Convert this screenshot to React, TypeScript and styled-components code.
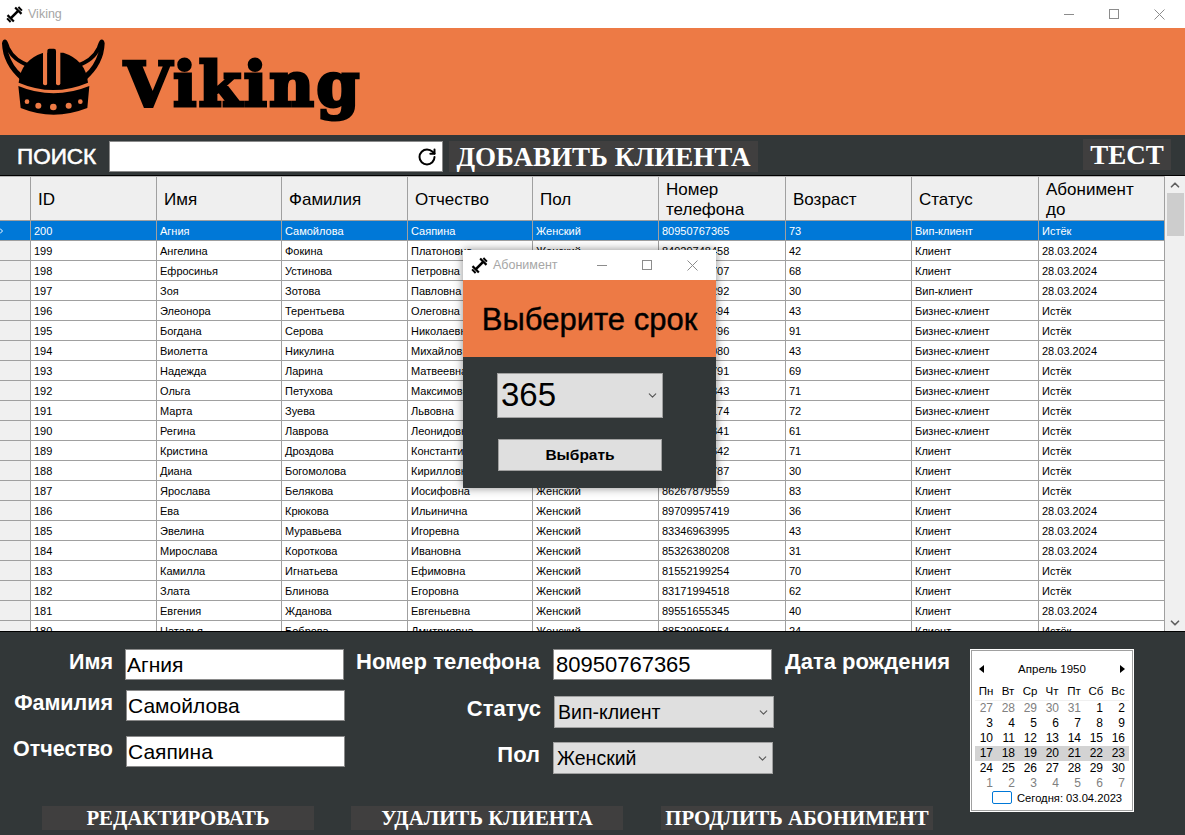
import React from 'react';
import styled, { createGlobalStyle } from 'styled-components';
import { ChevronDown, ChevronUp, RotateCw } from 'lucide-react';

const GlobalStyle = createGlobalStyle`
  html, body {
    margin: 0;
    padding: 0;
    overflow: hidden;
  }
  * {
    box-sizing: border-box;
  }
`;

const ORANGE = '#ed7a45';
const DARK = '#323738';
const SANS = `'Liberation Sans', Arial, sans-serif`;
const SERIF = `'Liberation Serif', 'Times New Roman', serif`;
const COLUMNS = '31px 126px 125px 126px 125px 126px 127px 126px 127px 126px';

const Page = styled.div`
  position: relative;
  width: 1185px;
  height: 835px;
  display: flex;
  flex-direction: column;
  overflow: hidden;
  background: ${DARK};
  font-family: ${SANS};
`;

const TitleBar = styled.div<{ $height: number; $right: number; $left: number }>`
  height: ${(p) => p.$height}px;
  flex: none;
  display: flex;
  align-items: center;
  padding: 0 ${(p) => p.$right}px 0 ${(p) => p.$left}px;
  background: #fff;
`;

const TitleText = styled.span`
  margin-left: 5px;
  font-size: 12.5px;
  color: #a6a6a6;
`;

const WindowControls = styled.div`
  margin-left: auto;
  display: flex;
  align-items: center;
  gap: 35px;
`;

const Banner = styled.div`
  height: 107px;
  flex: none;
  display: flex;
  align-items: flex-start;
  padding-top: 6px;
  background: ${ORANGE};
`;

const Wordmark = styled.div`
  margin: 15px 0 0 14px;
  font-family: 'DejaVu Serif', ${SERIF};
  font-weight: 700;
  font-size: 62px;
  line-height: 72px;
  letter-spacing: 2px;
  color: #000;
  -webkit-text-stroke: 3px #000;
`;

const Toolbar = styled.div`
  height: 41px;
  flex: none;
  display: flex;
  align-items: flex-start;
  padding: 6px 14px 0 17px;
  border-bottom: 1px solid #000;
`;

const SearchLabel = styled.div`
  width: 92px;
  height: 31px;
  line-height: 31px;
  font-size: 22.5px;
  font-weight: 400;
  color: #fff;
  -webkit-text-stroke: 0.6px #fff;
`;

const SearchBox = styled.div`
  width: 334px;
  height: 31px;
  display: flex;
  align-items: center;
  justify-content: flex-end;
  padding-right: 5px;
  background: #fff;
  border: 1px solid #8a8a8a;
`;

const ActionButton = styled.div<{ $width: number; $height: number; $size: number }>`
  width: ${(p) => p.$width}px;
  height: ${(p) => p.$height}px;
  flex: none;
  display: flex;
  align-items: center;
  justify-content: center;
  background: #403f3f;
  font-family: ${SERIF};
  font-weight: 700;
  font-size: ${(p) => p.$size}px;
  white-space: nowrap;
  color: #fff;
`;

const AddButton = styled(ActionButton)`
  margin-left: 6px;
  padding-top: 2px;
`;

const TestButton = styled(ActionButton)`
  margin: -2px 0 0 auto;
  padding-top: 2px;
`;

const TableArea = styled.div`
  height: 455px;
  flex: none;
  display: flex;
  background: #fff;
  overflow: hidden;
`;

const Table = styled.div`
  width: 1165px;
  flex: none;
`;

const HeaderRow = styled.div`
  height: 45px;
  display: grid;
  grid-template-columns: ${COLUMNS};
  background: #efefef;
  border-top: 1px solid #b5b5b5;
  border-bottom: 1px solid #a0a0a0;
`;

const HeaderCell = styled.div`
  display: flex;
  align-items: center;
  padding: 2px 8px 0 7px;
  font-size: 17px;
  line-height: 20px;
  color: #000;
  border-right: 1px solid #a0a0a0;
`;

const Row = styled.div<{ $selected?: boolean }>`
  height: 20px;
  display: grid;
  grid-template-columns: ${COLUMNS};
  background: ${(p) => (p.$selected ? '#0078d7' : '#fff')};
  color: ${(p) => (p.$selected ? '#fff' : '#000')};
  border-bottom: 1px solid #a0a0a0;
`;

const RowHead = styled.div<{ $selected?: boolean }>`
  display: flex;
  align-items: center;
  background: ${(p) => (p.$selected ? '#0078d7' : '#f0f0f0')};
  border-right: 1px solid #a0a0a0;
`;

const Cell = styled.div`
  padding-left: 3px;
  line-height: 21px;
  font-size: 11px;
  white-space: nowrap;
  overflow: hidden;
  border-right: 1px solid #a0a0a0;
`;

const Scrollbar = styled.div`
  width: 20px;
  flex: none;
  display: flex;
  flex-direction: column;
  align-items: center;
  background: #f0f0f0;
  color: #606060;
`;

const ScrollThumb = styled.div`
  width: 17px;
  height: 43px;
  margin-top: 0;
  background: #cdcdcd;
`;

const ScrollSpacer = styled.div`
  flex: 1;
`;

const ScrollArrow = styled.div`
  height: 17px;
  display: flex;
  align-items: center;
`;

const BottomPanel = styled.div`
  flex: 1;
  display: flex;
  padding-top: 17px;
  border-top: 1px solid #000;
`;

const MainColumn = styled.div`
  width: 971px;
  display: flex;
  flex-direction: column;
`;

const FormRow = styled.div`
  height: 157px;
  display: flex;
`;

const FieldColumn = styled.div<{ $width: number }>`
  width: ${(p) => p.$width}px;
  flex: none;
`;

const Field = styled.div<{ $top?: number; $labelWidth: number; $gap: number }>`
  display: grid;
  grid-template-columns: ${(p) => p.$labelWidth}px auto;
  column-gap: ${(p) => p.$gap}px;
  margin-top: ${(p) => p.$top || 0}px;
`;

const FieldLabel = styled.div<{ $size: number }>`
  padding-top: 1px;
  text-align: right;
  line-height: 24px;
  font-size: ${(p) => p.$size}px;
  font-weight: 700;
  white-space: nowrap;
  color: #fff;
`;

const TextInput = styled.input`
  width: 219px;
  height: 31px;
  padding: 0 1px 0 1px;
  background: #fff;
  border: 1px solid #8a8a8a;
  border-radius: 0;
  outline: none;
  font-family: ${SANS};
  font-size: 21px;
  color: #000;
`;

const PhoneInput = styled(TextInput)`
  padding-left: 2px;
  font-size: 22px;
`;

const SelectBox = styled.div<{ $size: number; $height: number; $width: number }>`
  width: ${(p) => p.$width}px;
  height: ${(p) => p.$height}px;
  display: flex;
  align-items: center;
  justify-content: space-between;
  padding: 0 3px 0 3px;
  background: #dfdfdf;
  border: 1px solid #a0a0a0;
  font-size: ${(p) => p.$size}px;
  color: #000;
`;

const DialogSelectValue = styled.span`
  margin-top: -2px;
`;

const DateLabel = styled(FieldLabel)`
  margin-left: 11px;
  text-align: left;
`;

const ButtonsRow = styled.div`
  display: flex;
  padding-left: 42px;
  gap: 37px;
  & > :last-child {
    margin-left: 1px;
  }
`;

const Calendar = styled.div`
  width: 162px;
  height: 161px;
  flex: none;
  margin: 1px 0 0 0;
  padding: 10px 3px 0;
  background: #fff;
  outline: 1px solid #fff;
  border: 1px solid #a0a0a0;
  font-size: 11px;
  color: #000;
`;

const CalendarTitle = styled.div`
  display: flex;
  align-items: center;
  justify-content: space-between;
  height: 16px;
  padding: 0 4px;
  font-size: 11.5px;
`;

const CalendarGrid = styled.div`
  margin-top: 7px;
  display: grid;
  grid-template-columns: repeat(7, 22px);
  width: 154px;
`;

const WeekDay = styled.div`
  height: 17px;
  line-height: 14px;
  font-size: 11.5px;
  text-align: center;
  border-bottom: 1px solid #f0f0f0;
`;

const Day = styled.div<{ $muted?: boolean; $week?: boolean }>`
  height: 15px;
  line-height: 15px;
  padding-right: 4px;
  text-align: right;
  font-size: 12px;
  color: ${(p) => (p.$muted ? '#808080' : '#000')};
  background: ${(p) => (p.$week ? '#d3d3d3' : 'transparent')};
`;

const TodayLine = styled.div`
  margin: 0 0 0 17px;
  display: flex;
  align-items: center;
  gap: 5px;
  font-size: 11.2px;
  white-space: nowrap;
`;

const TodayMark = styled.span`
  width: 20px;
  height: 13px;
  border: 1px solid #0078d7;
  border-radius: 2px;
`;

const Dialog = styled.div`
  position: absolute;
  left: 463px;
  top: 250px;
  width: 253px;
  height: 238px;
  display: flex;
  flex-direction: column;
  background: ${DARK};
  box-shadow: 0 0 9px rgba(0, 0, 0, 0.45);
`;

const DialogHead = styled.div`
  height: 77px;
  flex: none;
  display: flex;
  align-items: center;
  justify-content: center;
  padding-top: 2px;
  background: ${ORANGE};
  font-size: 31px;
  color: #000;
  -webkit-text-stroke: 0.4px #000;
`;

const DialogBody = styled.div`
  padding: 16px 0 0 34px;
`;

const DialogButton = styled.div`
  width: 164px;
  height: 32px;
  margin: 21px 0 0 1px;
  display: flex;
  align-items: center;
  justify-content: center;
  background: #dfdfdf;
  border: 1px solid #a0a0a0;
  font-size: 15.5px;
  font-weight: 700;
  color: #000;
`;

const CLIENTS = [
  ['200', 'Агния', 'Самойлова', 'Саяпина', 'Женский', '80950767365', '73', 'Вип-клиент', 'Истёк'],
  ['199', 'Ангелина', 'Фокина', 'Платоновна', 'Женский', '84929748458', '42', 'Клиент', '28.03.2024'],
  ['198', 'Ефросинья', 'Устинова', 'Петровна', 'Женский', '83146525707', '68', 'Клиент', '28.03.2024'],
  ['197', 'Зоя', 'Зотова', 'Павловна', 'Женский', '81774036292', '30', 'Вип-клиент', '28.03.2024'],
  ['196', 'Элеонора', 'Терентьева', 'Олеговна', 'Женский', '85310268494', '43', 'Бизнес-клиент', 'Истёк'],
  ['195', 'Богдана', 'Серова', 'Николаевна', 'Женский', '87642159796', '91', 'Бизнес-клиент', 'Истёк'],
  ['194', 'Виолетта', 'Никулина', 'Михайловна', 'Женский', '82958371080', '43', 'Бизнес-клиент', '28.03.2024'],
  ['193', 'Надежда', 'Ларина', 'Матвеевна', 'Женский', '86413920791', '69', 'Бизнес-клиент', 'Истёк'],
  ['192', 'Ольга', 'Петухова', 'Максимовна', 'Женский', '88205617343', '71', 'Бизнес-клиент', 'Истёк'],
  ['191', 'Марта', 'Зуева', 'Львовна', 'Женский', '84760392174', '72', 'Бизнес-клиент', 'Истёк'],
  ['190', 'Регина', 'Лаврова', 'Леонидовна', 'Женский', '81529046341', '61', 'Бизнес-клиент', 'Истёк'],
  ['189', 'Кристина', 'Дроздова', 'Константиновна', 'Женский', '83097514642', '71', 'Клиент', 'Истёк'],
  ['188', 'Диана', 'Богомолова', 'Кирилловна', 'Женский', '85681203787', '30', 'Клиент', 'Истёк'],
  ['187', 'Ярослава', 'Белякова', 'Иосифовна', 'Женский', '86267879559', '83', 'Клиент', 'Истёк'],
  ['186', 'Ева', 'Крюкова', 'Ильинична', 'Женский', '89709957419', '36', 'Клиент', '28.03.2024'],
  ['185', 'Эвелина', 'Муравьева', 'Игоревна', 'Женский', '83346963995', '43', 'Клиент', '28.03.2024'],
  ['184', 'Мирослава', 'Короткова', 'Ивановна', 'Женский', '85326380208', '31', 'Клиент', '28.03.2024'],
  ['183', 'Камилла', 'Игнатьева', 'Ефимовна', 'Женский', '81552199254', '70', 'Клиент', 'Истёк'],
  ['182', 'Злата', 'Блинова', 'Егоровна', 'Женский', '83171994518', '62', 'Клиент', 'Истёк'],
  ['181', 'Евгения', 'Жданова', 'Евгеньевна', 'Женский', '89551655345', '40', 'Клиент', '28.03.2024'],
  ['180', 'Наталья', 'Боброва', 'Дмитриевна', 'Женский', '88529959554', '24', 'Клиент', 'Истёк'],
];

const HEADERS = ['', 'ID', 'Имя', 'Фамилия', 'Отчество', 'Пол', 'Номер телефона', 'Возраст', 'Статус', 'Абонимент до'];
const WEEK_DAYS = ['Пн', 'Вт', 'Ср', 'Чт', 'Пт', 'Сб', 'Вс'];
const DAYS = [
  27, 28, 29, 30, 31, 1, 2, 3, 4, 5, 6, 7, 8, 9, 10, 11, 12, 13, 14, 15, 16, 17, 18, 19, 20, 21, 22, 23, 24, 25, 26,
  27, 28, 29, 30, 1, 2, 3, 4, 5, 6, 7,
];

const Dumbbell = () => (
  <svg width="17" height="17" viewBox="0 0 17 17">
    <g transform="rotate(-45 8.5 8.5)" fill="#000">
      <rect x="3" y="7.2" width="11" height="2.6" />
      <rect x="-0.5" y="6" width="2" height="5" />
      <rect x="2" y="4" width="2.2" height="9" />
      <rect x="12.8" y="4" width="2.2" height="9" />
      <rect x="15.5" y="6" width="2" height="5" />
    </g>
  </svg>
);

const Controls = () => (
  <WindowControls>
    <svg width="10" height="10" viewBox="0 0 10 10">
      <path d="M0 5.5H10" stroke="#8c8c8c" />
    </svg>
    <svg width="10" height="10" viewBox="0 0 10 10">
      <rect x="0.5" y="0.5" width="9" height="9" fill="none" stroke="#8c8c8c" />
    </svg>
    <svg width="11" height="11" viewBox="0 0 11 11">
      <path d="M0.5 0.5L10.5 10.5M10.5 0.5L0.5 10.5" stroke="#8c8c8c" />
    </svg>
  </WindowControls>
);

const Helmet = () => (
  <svg width="110" height="88" viewBox="0 0 330 264">
    <path d="M6 28Q8 14 18 17Q24 22 29 40Q46 76 95 92L110 112L64 140Q8 92 6 28Z" fill="#000" />
    <path d="M24 54Q42 88 102 106Q84 124 66 120Q38 98 24 54Z" fill={ORANGE} />
    <g transform="translate(320 0) scale(-1 1)">
      <path d="M6 28Q8 14 18 17Q24 22 29 40Q46 76 95 92L110 112L64 140Q8 92 6 28Z" fill="#000" />
      <path d="M24 54Q42 88 102 106Q84 124 66 120Q38 98 24 54Z" fill={ORANGE} />
    </g>
    <path d="M56 146Q62 78 130 56L190 56Q258 78 264 146Q160 190 56 146Z" fill="#000" />
    <rect x="129" y="50" width="13" height="104" rx="6" fill={ORANGE} />
    <rect x="168" y="50" width="13" height="104" rx="6" fill={ORANGE} />
    <rect x="142" y="44" width="26" height="112" rx="6" fill="#000" />
    <path d="M55 156Q160 200 268 156L262 222Q160 262 62 222Z" fill="#000" />
    <circle cx="81" cy="203" r="7" fill={ORANGE} />
    <circle cx="115" cy="215" r="9" fill={ORANGE} />
    <circle cx="160" cy="219" r="10" fill={ORANGE} />
    <circle cx="206" cy="215" r="9" fill={ORANGE} />
    <circle cx="241" cy="203" r="7" fill={ORANGE} />
  </svg>
);

const Triangle = ({ left }: { left?: boolean }) => (
  <svg width="5" height="8" viewBox="0 0 5 8">
    <path d={left ? 'M5 0V8L0 4Z' : 'M0 0V8L5 4Z'} fill="#000" />
  </svg>
);

const RowPointer = () => (
  <svg width="3" height="6" viewBox="0 0 3 6">
    <path d="M0 0.5L2.5 3L0 5.5" fill="none" stroke="#fff" />
  </svg>
);

const App = () => {
  return (
    <Page>
      <GlobalStyle />
      <TitleBar $height={28} $right={20} $left={6}>
        <Dumbbell />
        <TitleText>Viking</TitleText>
        <Controls />
      </TitleBar>
      <Banner>
        <Helmet />
        <Wordmark>Viking</Wordmark>
      </Banner>
      <Toolbar>
        <SearchLabel>ПОИСК</SearchLabel>
        <SearchBox>
          <RotateCw size={20} strokeWidth={2.4} color="#000" />
        </SearchBox>
        <AddButton $width={309} $height={31} $size={27}>
          ДОБАВИТЬ КЛИЕНТА
        </AddButton>
        <TestButton $width={88} $height={31} $size={27}>
          ТЕСТ
        </TestButton>
      </Toolbar>
      <TableArea>
        <Table>
          <HeaderRow>
            {HEADERS.map((title) => (
              <HeaderCell key={title}>{title}</HeaderCell>
            ))}
          </HeaderRow>
          {CLIENTS.map((client, index) => (
            <Row key={client[0]} $selected={index === 0}>
              <RowHead $selected={index === 0}>{index === 0 && <RowPointer />}</RowHead>
              {client.map((value, col) => (
                <Cell key={col}>{value}</Cell>
              ))}
            </Row>
          ))}
        </Table>
        <Scrollbar>
          <ScrollArrow>
            <ChevronUp size={14} strokeWidth={3} />
          </ScrollArrow>
          <ScrollThumb />
          <ScrollSpacer />
          <ScrollArrow>
            <ChevronDown size={14} strokeWidth={3} />
          </ScrollArrow>
        </Scrollbar>
      </TableArea>
      <BottomPanel>
        <MainColumn>
          <FormRow>
            <FieldColumn $width={350}>
              <Field $labelWidth={113} $gap={12}>
                <FieldLabel $size={21.5}>Имя</FieldLabel>
                <TextInput readOnly value="Агния" />
              </Field>
              <Field $top={10} $labelWidth={113} $gap={13}>
                <FieldLabel $size={21.5}>Фамилия</FieldLabel>
                <TextInput readOnly value="Самойлова" />
              </Field>
              <Field $top={15} $labelWidth={113} $gap={13}>
                <FieldLabel $size={21.5}>Отчество</FieldLabel>
                <TextInput readOnly value="Саяпина" />
              </Field>
            </FieldColumn>
            <FieldColumn $width={424}>
              <Field $labelWidth={190} $gap={13}>
                <FieldLabel $size={22}>Номер телефона</FieldLabel>
                <PhoneInput readOnly value="80950767365" />
              </Field>
              <Field $top={16} $labelWidth={191} $gap={13}>
                <FieldLabel $size={22}>Статус</FieldLabel>
                <SelectBox $width={220} $height={32} $size={19.5}>
                  Вип-клиент
                  <ChevronDown size={13} color="#555" />
                </SelectBox>
              </Field>
              <Field $top={14} $labelWidth={190} $gap={13}>
                <FieldLabel $size={22}>Пол</FieldLabel>
                <SelectBox $width={220} $height={32} $size={19.5}>
                  Женский
                  <ChevronDown size={13} color="#555" />
                </SelectBox>
              </Field>
            </FieldColumn>
            <DateLabel $size={22}>Дата рождения</DateLabel>
          </FormRow>
          <ButtonsRow>
            <ActionButton $width={272} $height={24} $size={20.8}>
              РЕДАКТИРОВАТЬ
            </ActionButton>
            <ActionButton $width={272} $height={24} $size={20.8}>
              УДАЛИТЬ КЛИЕНТА
            </ActionButton>
            <ActionButton $width={272} $height={24} $size={20.8}>
              ПРОДЛИТЬ АБОНИМЕНТ
            </ActionButton>
          </ButtonsRow>
        </MainColumn>
        <Calendar>
          <CalendarTitle>
            <Triangle left />
            Апрель 1950
            <Triangle />
          </CalendarTitle>
          <CalendarGrid>
            {WEEK_DAYS.map((day) => (
              <WeekDay key={day}>{day}</WeekDay>
            ))}
            {DAYS.map((day, index) => (
              <Day key={index} $muted={index < 5 || index > 34} $week={index >= 21 && index < 28}>
                {day}
              </Day>
            ))}
          </CalendarGrid>
          <TodayLine>
            <TodayMark />
            Сегодня: 03.04.2023
          </TodayLine>
        </Calendar>
      </BottomPanel>
      <Dialog>
        <TitleBar $height={30} $right={18} $left={8}>
          <Dumbbell />
          <TitleText>Абонимент</TitleText>
          <Controls />
        </TitleBar>
        <DialogHead>Выберите срок</DialogHead>
        <DialogBody>
          <SelectBox $width={166} $height={45} $size={33}>
            <DialogSelectValue>365</DialogSelectValue>
            <ChevronDown size={13} color="#555" />
          </SelectBox>
          <DialogButton>Выбрать</DialogButton>
        </DialogBody>
      </Dialog>
    </Page>
  );
};

export default App;
